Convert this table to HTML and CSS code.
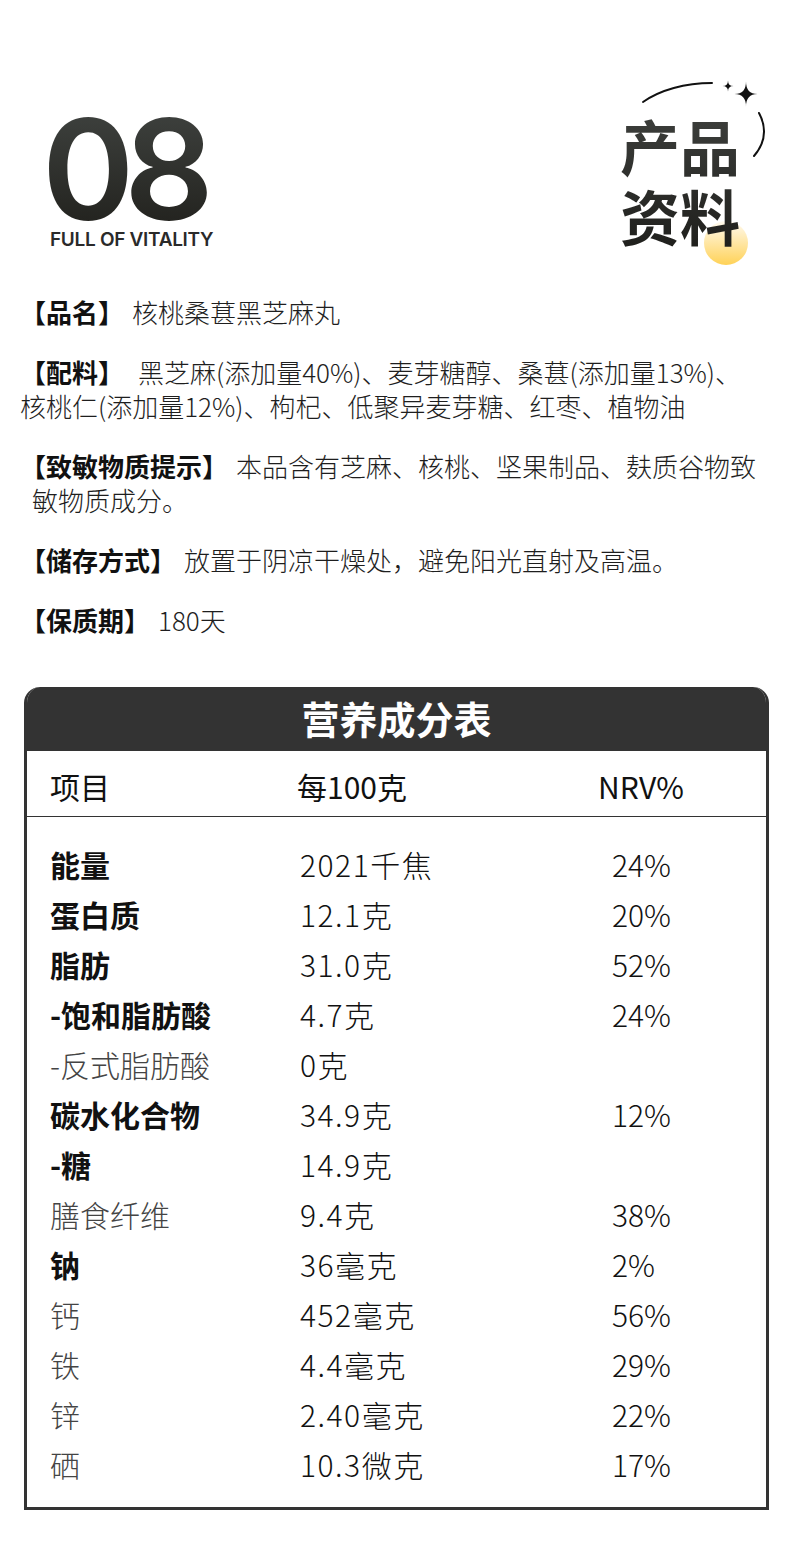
FILE: index.html
```html
<!DOCTYPE html>
<html lang="zh-CN">
<head>
<meta charset="utf-8">
<link rel="stylesheet" href="styles.css">
</head>
<body>
<div class="page">
  <header class="hero">
    <div class="hero-left">
      <div class="num">08</div>
      <div class="tag">FULL OF VITALITY</div>
    </div>
    <div class="hero-right">
      <div class="title">产品<br>资料</div>
    </div>
    <svg class="deco" viewBox="600 60 190 220" width="190" height="220">
      <defs>
        <linearGradient id="sun" x1="0" y1="0" x2="0" y2="1">
          <stop offset="0" stop-color="#fffaf0"/>
          <stop offset="1" stop-color="#ffd257"/>
        </linearGradient>
      </defs>
      <circle cx="726" cy="243" r="22" fill="url(#sun)"/>
      <path d="M643 102 C660 90 685 83 712 83" fill="none" stroke="#111" stroke-width="2" stroke-linecap="round"/>
      <path d="M759 113 C767 128 765 143 754 156" fill="none" stroke="#111" stroke-width="2" stroke-linecap="round"/>
      <path d="M746 81.5 Q746 94 757.5 94 Q746 94 746 106.5 Q746 94 734.5 94 Q746 94 746 81.5 Z" fill="#111"/>
      <path d="M728 80.5 Q728 86 733.5 86 Q728 86 728 91.5 Q728 86 722.5 86 Q728 86 728 80.5 Z" fill="#111"/>
    </svg>
  </header>

  <section class="info">
    <p><b class="lab">【品名】</b>核桃桑葚黑芝麻丸</p>
    <p><b class="lab wide">【配料】</b>黑芝麻(添加量40%)、麦芽糖醇、桑葚(添加量13%)、核桃仁(添加量12%)、枸杞、低聚异麦芽糖、红枣、植物油</p>
    <p class="hang"><b class="lab">【致敏物质提示】</b>本品含有芝麻、核桃、坚果制品、麸质谷物致敏物质成分。</p>
    <p><b class="lab">【储存方式】</b>放置于阴凉干燥处，避免阳光直射及高温。</p>
    <p><b class="lab">【保质期】</b>180天</p>
  </section>

  <section class="nutri">
    <div class="n-title">营养成分表</div>
    <div class="n-head"><span>项目</span><span>每100克</span><span>NRV%</span></div>
    <div class="n-body">
      <div class="row strong"><span>能量</span><span>2021千焦</span><span>24%</span></div>
      <div class="row strong"><span>蛋白质</span><span>12.1克</span><span>20%</span></div>
      <div class="row strong"><span>脂肪</span><span>31.0克</span><span>52%</span></div>
      <div class="row strong"><span>-饱和脂肪酸</span><span>4.7克</span><span>24%</span></div>
      <div class="row light"><span>-反式脂肪酸</span><span>0克</span><span></span></div>
      <div class="row strong"><span>碳水化合物</span><span>34.9克</span><span>12%</span></div>
      <div class="row strong"><span>-糖</span><span>14.9克</span><span></span></div>
      <div class="row light"><span>膳食纤维</span><span>9.4克</span><span>38%</span></div>
      <div class="row strong"><span>钠</span><span>36毫克</span><span>2%</span></div>
      <div class="row light"><span>钙</span><span>452毫克</span><span>56%</span></div>
      <div class="row light"><span>铁</span><span>4.4毫克</span><span>29%</span></div>
      <div class="row light"><span>锌</span><span>2.40毫克</span><span>22%</span></div>
      <div class="row light"><span>硒</span><span>10.3微克</span><span>17%</span></div>
    </div>
  </section>
</div>
</body>
</html>
```

FILE: styles.css
```css
* { box-sizing: border-box; }
html, body { margin: 0; padding: 0; background: #fff; }
body {
  font-family: "Noto Sans CJK SC", "Noto Sans", sans-serif;
  color: #222;
}
.page { width: 790px; height: 1554px; overflow: hidden; }

/* hero */
.hero {
  position: relative;
  display: flex;
  justify-content: space-between;
  align-items: flex-start;
  padding: 110px 50px 0 42px;
}
.hero-left { margin-top: 3px; }
.num {
  font-family: "Inter", "Roboto", sans-serif;
  font-weight: 600;
  font-size: 140px;
  line-height: 0.8;
  height: 112px;
  letter-spacing: -10px;
  background: linear-gradient(#3d403d, #23231f);
  -webkit-background-clip: text;
  background-clip: text;
  color: transparent;
}
.tag {
  margin-top: 5px;
  margin-left: 8px;
  font-family: "Inter", "Roboto", sans-serif;
  font-weight: 600;
  font-size: 19px;
  line-height: 20px;
  letter-spacing: -0.3px;
  color: #2a2a2a;
}
.hero-right { position: relative; z-index: 1; }
.title {
  font-weight: 700;
  font-size: 60px;
  line-height: 70px;
  background: linear-gradient(#3d3f3c, #1f1f1c);
  -webkit-background-clip: text;
  background-clip: text;
  color: transparent;
}
.deco { position: absolute; left: 600px; top: 60px; }

/* info */
.info { padding: 45px 27px 0 20px; }
.info p {
  margin: 0 0 26px;
  font-size: 26px;
  line-height: 34px;
  font-weight: 300;
  color: #1e1e1e;
}
.info .lab {
  display: inline-block;
  font-weight: 700;
  color: #111;
  margin-right: 8px;
  text-indent: 0;
}
.info .lab.wide { margin-right: 14px; }
.info p.hang { padding-left: 12px; text-indent: -12px; }

/* nutrition table */
.nutri {
  margin: 50px 0 0 24px;
  width: 745px;
  border: 3px solid #333;
  border-top: 0;
  border-radius: 16px 16px 0 0;
  overflow: hidden;
}
.n-title {
  background: #333;
  color: #fff;
  height: 64px;
  margin: 0 -3px;
  border-radius: 16px 16px 0 0;
  text-align: center;
  font-size: 38px;
  font-weight: 700;
  line-height: 62px;
}
.n-head {
  display: grid;
  grid-template-columns: 247px 301px 1fr;
  padding: 6px 0 0 23px;
  height: 66px;
  line-height: 58px;
  font-size: 30px;
  font-weight: 400;
  color: #111;
  border-bottom: 1px solid #333;
}
.n-body { padding: 22px 0 18px 23px; }
.row {
  display: grid;
  grid-template-columns: 250px 312px 1fr;
  height: 50px;
  line-height: 50px;
  font-size: 30px;
  font-weight: 300;
  color: #111;
}
.row span:nth-child(2) { letter-spacing: 1.5px; }
.row.strong span:first-child { font-weight: 700; color: #111; }
.row.light span:first-child { font-weight: 200; color: #444; }
```
